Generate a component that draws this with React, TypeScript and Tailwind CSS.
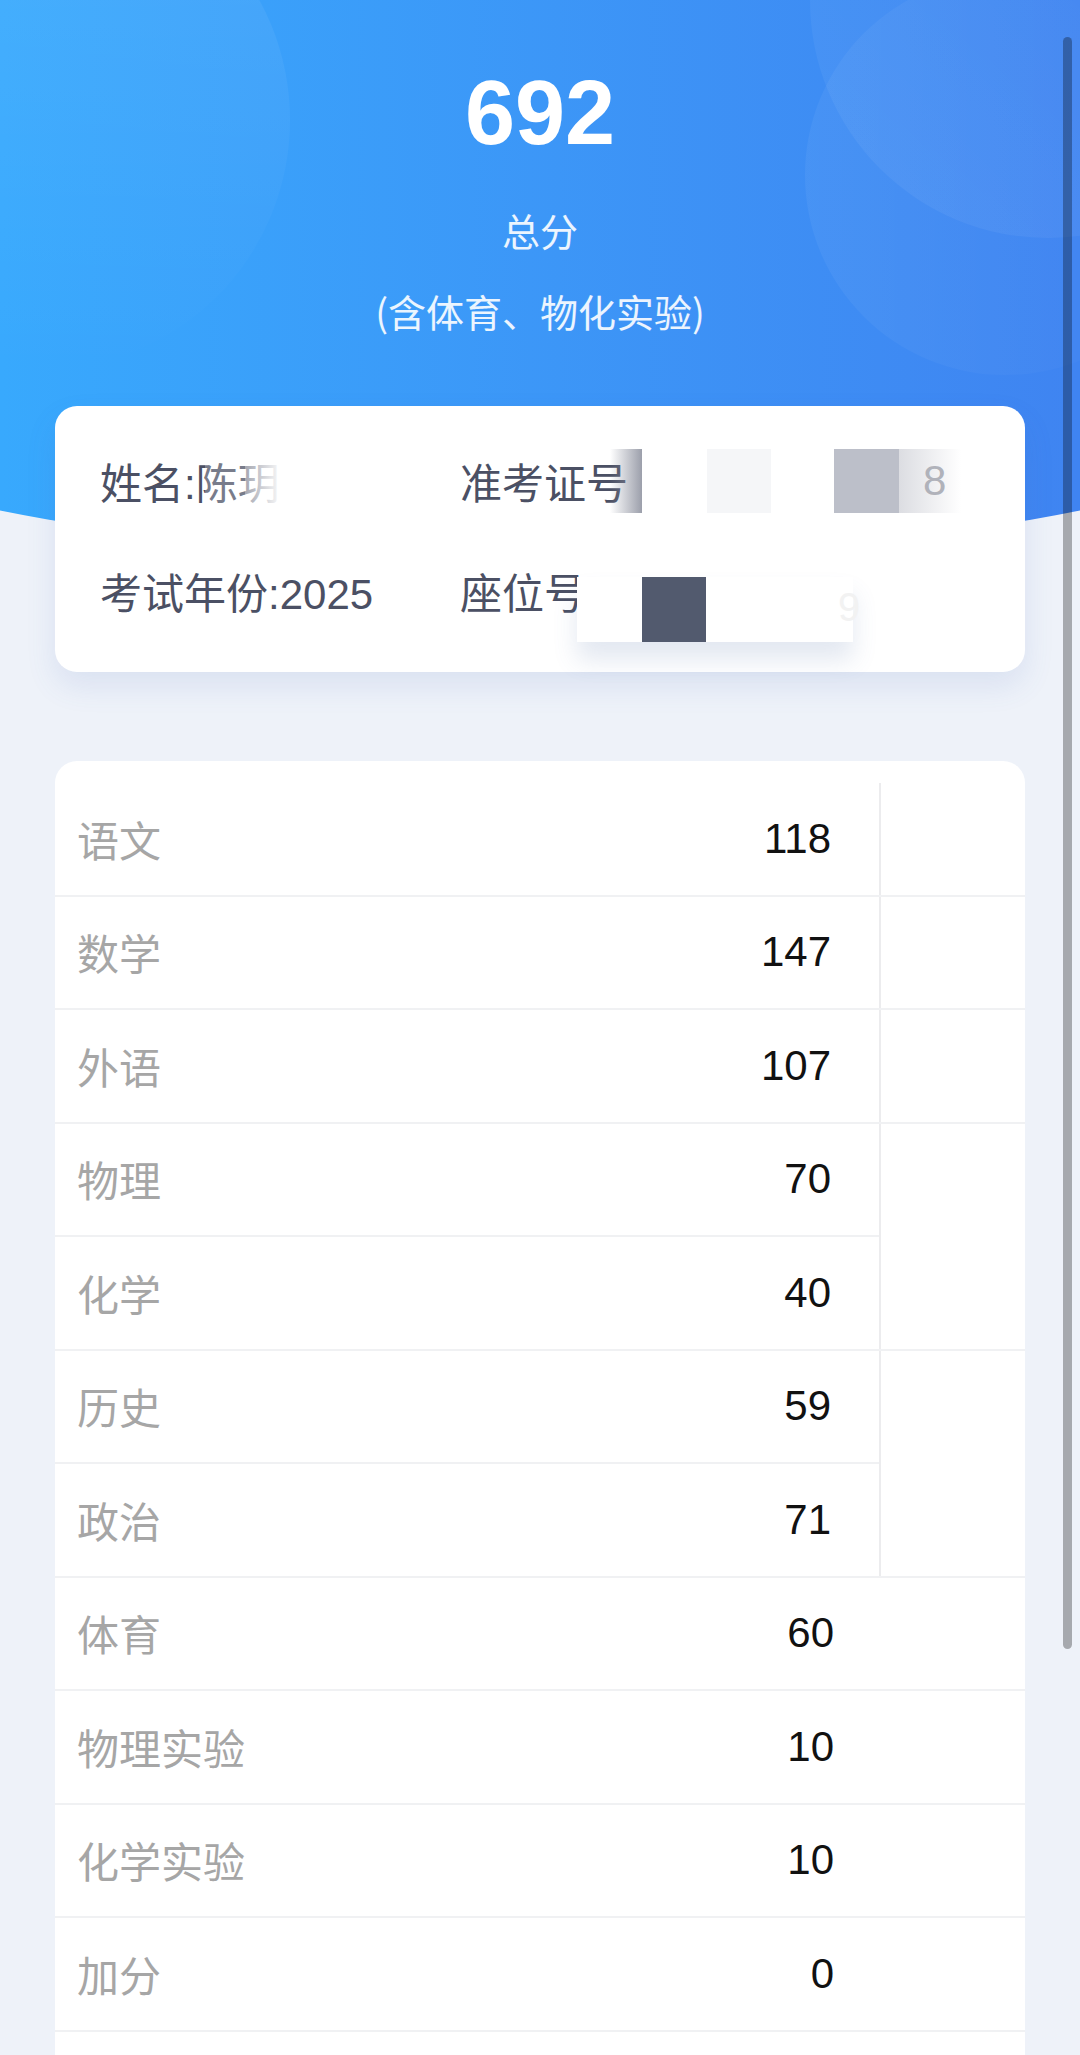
import React from 'react';

const TOP_ROWS = [
  { name: '语文', score: 118 },
  { name: '数学', score: 147 },
  { name: '外语', score: 107 },
];

const PAIRS = [
  [
    { name: '物理', score: 70 },
    { name: '化学', score: 40 },
  ],
  [
    { name: '历史', score: 59 },
    { name: '政治', score: 71 },
  ],
];

const EXTRA_ROWS = [
  { name: '体育', score: 60 },
  { name: '物理实验', score: 10 },
  { name: '化学实验', score: 10 },
  { name: '加分', score: 0 },
];

const cjk = "font-['Noto_Sans_CJK_SC',sans-serif]";
const num = "font-['Liberation_Sans','Noto_Sans_CJK_SC',sans-serif]";

const Cell = ({ name, score }: { name: string; score: number | string }) => (
  <div className="w-[824px] h-full flex items-center justify-between pl-[22px] pr-[48px]">
    <span className={`${cjk} text-[42px] leading-none text-[#a6a6a6]`}>{name}</span>
    <span className={`${num} text-[42px] leading-none text-[#111]`}>{score}</span>
  </div>
);

export default function App() {
  return (
    <div className="relative w-full min-h-[2055px] overflow-hidden bg-[#eef2f9]">
      {/* header */}
      <header className="relative h-[562px] overflow-hidden bg-linear-to-r from-[#38a9fd] to-[#3f84f1] [clip-path:ellipse(1290px_562px_at_50%_0%)]">
        <div className="absolute left-[-210px] top-[-130px] w-[500px] h-[500px] rounded-full bg-linear-to-b from-white/8 to-white/0" />
        <div className="absolute left-[810px] top-[-238px] w-[476px] h-[476px] rounded-full bg-linear-to-bl from-white/0 to-white/6" />
        <div className="absolute left-[805px] top-[-25px] w-[400px] h-[400px] rounded-full bg-linear-to-r from-white/5 to-white/0" />

        <div className="relative flex flex-col items-center pt-[68px] text-white">
          <div className={`${num} text-[90px] font-bold leading-none h-[90px]`}>692</div>
          <div className={`${cjk} mt-[53px] text-[38px] leading-none text-white/90`}>总分</div>
          <div className={`${cjk} mt-[43px] text-[38px] leading-none text-white/90`}>(含体育、物化实验)</div>
        </div>
      </header>

      {/* student info */}
      <section className="relative z-10 mx-[55px] -mt-[156px] h-[266px] rounded-[22px] bg-white pt-[24px] pl-[45px] shadow-[0_14px_30px_rgba(70,110,190,0.12)]">
        <div className={`${num} flex h-[110px] items-center text-[42px] leading-none text-[#4b5064]`}>
          <span className="w-[360px]">姓名:陈玥</span>
          <span>准考证号</span>
        </div>
        <div className={`${num} flex h-[110px] items-center text-[42px] leading-none text-[#4b5064]`}>
          <span className="w-[360px]">考试年份:2025</span>
          <span>座位号</span>
        </div>

        {/* redaction marks */}
        <div className="absolute left-[150px] top-[43px] w-[40px] h-[64px] bg-white/25" />
        <div className="absolute left-[190px] top-[43px] w-[75px] h-[64px] bg-linear-to-r from-white/50 via-white to-white/0" />
        <div className="absolute left-[555px] top-[43px] w-[32px] h-[64px] bg-linear-to-r from-[#8a8e9c]/0 to-[#8a8e9c]/85" />
        <div className="absolute left-[652px] top-[43px] w-[64px] h-[64px] bg-[#f5f6f8]" />
        <div className="absolute left-[779px] top-[43px] w-[65px] h-[64px] bg-[#bcbfc9]" />
        <div className="absolute left-[844px] top-[43px] w-[62px] h-[64px] bg-linear-to-r from-[#dcdde2] to-white/0 flex items-center pl-[24px]">
          <span className={`${num} text-[42px] leading-none text-[#b0b2ba]`}>8</span>
        </div>

        <div className="absolute left-[522px] top-[171px] w-[276px] h-[65px] bg-white shadow-[0_18px_24px_rgba(80,110,170,0.16)]" />
        <div className="absolute left-[587px] top-[171px] w-[64px] h-[65px] bg-[#525a6e]" />
        <div className="absolute left-[783px] top-[176px] h-[50px] flex items-center">
          <span className={`${num} text-[40px] leading-none text-[#f2f2f2]`}>9</span>
        </div>
      </section>

      {/* scores */}
      <section className="relative mx-[55px] mt-[89px] rounded-t-[22px] bg-white pt-[22px]">
        {TOP_ROWS.map((r) => (
          <div key={r.name} className="flex h-[113.5px] border-b-2 border-[#f0f1f3]">
            <Cell name={r.name} score={r.score} />
            <div className="flex-1 border-l-2 border-[#ececee]" />
          </div>
        ))}

        {PAIRS.map((pair) => (
          <div key={pair[0].name} className="flex border-b-2 border-[#f0f1f3]">
            <div className="flex flex-col">
              <div className="h-[113.5px] border-b-2 border-[#f0f1f3]">
                <Cell name={pair[0].name} score={pair[0].score} />
              </div>
              <div className="h-[111.5px]">
                <Cell name={pair[1].name} score={pair[1].score} />
              </div>
            </div>
            <div className="flex-1 border-l-2 border-[#ececee]" />
          </div>
        ))}

        {EXTRA_ROWS.map((r) => (
          <div key={r.name} className="flex h-[113.5px] border-b-2 border-[#f0f1f3]">
            <div className="w-[824px] h-full flex items-center justify-between pl-[22px] pr-[45px]">
              <span className={`${cjk} text-[42px] leading-none text-[#a6a6a6]`}>{r.name}</span>
              <span className={`${num} text-[42px] leading-none text-[#111]`}>{r.score}</span>
            </div>
          </div>
        ))}
        <div className="h-[113.5px]" />
      </section>

      {/* scrollbar */}
      <div className="absolute left-[1063px] top-[37px] w-[9px] h-[1612px] rounded-full bg-black/30" />
    </div>
  );
}
